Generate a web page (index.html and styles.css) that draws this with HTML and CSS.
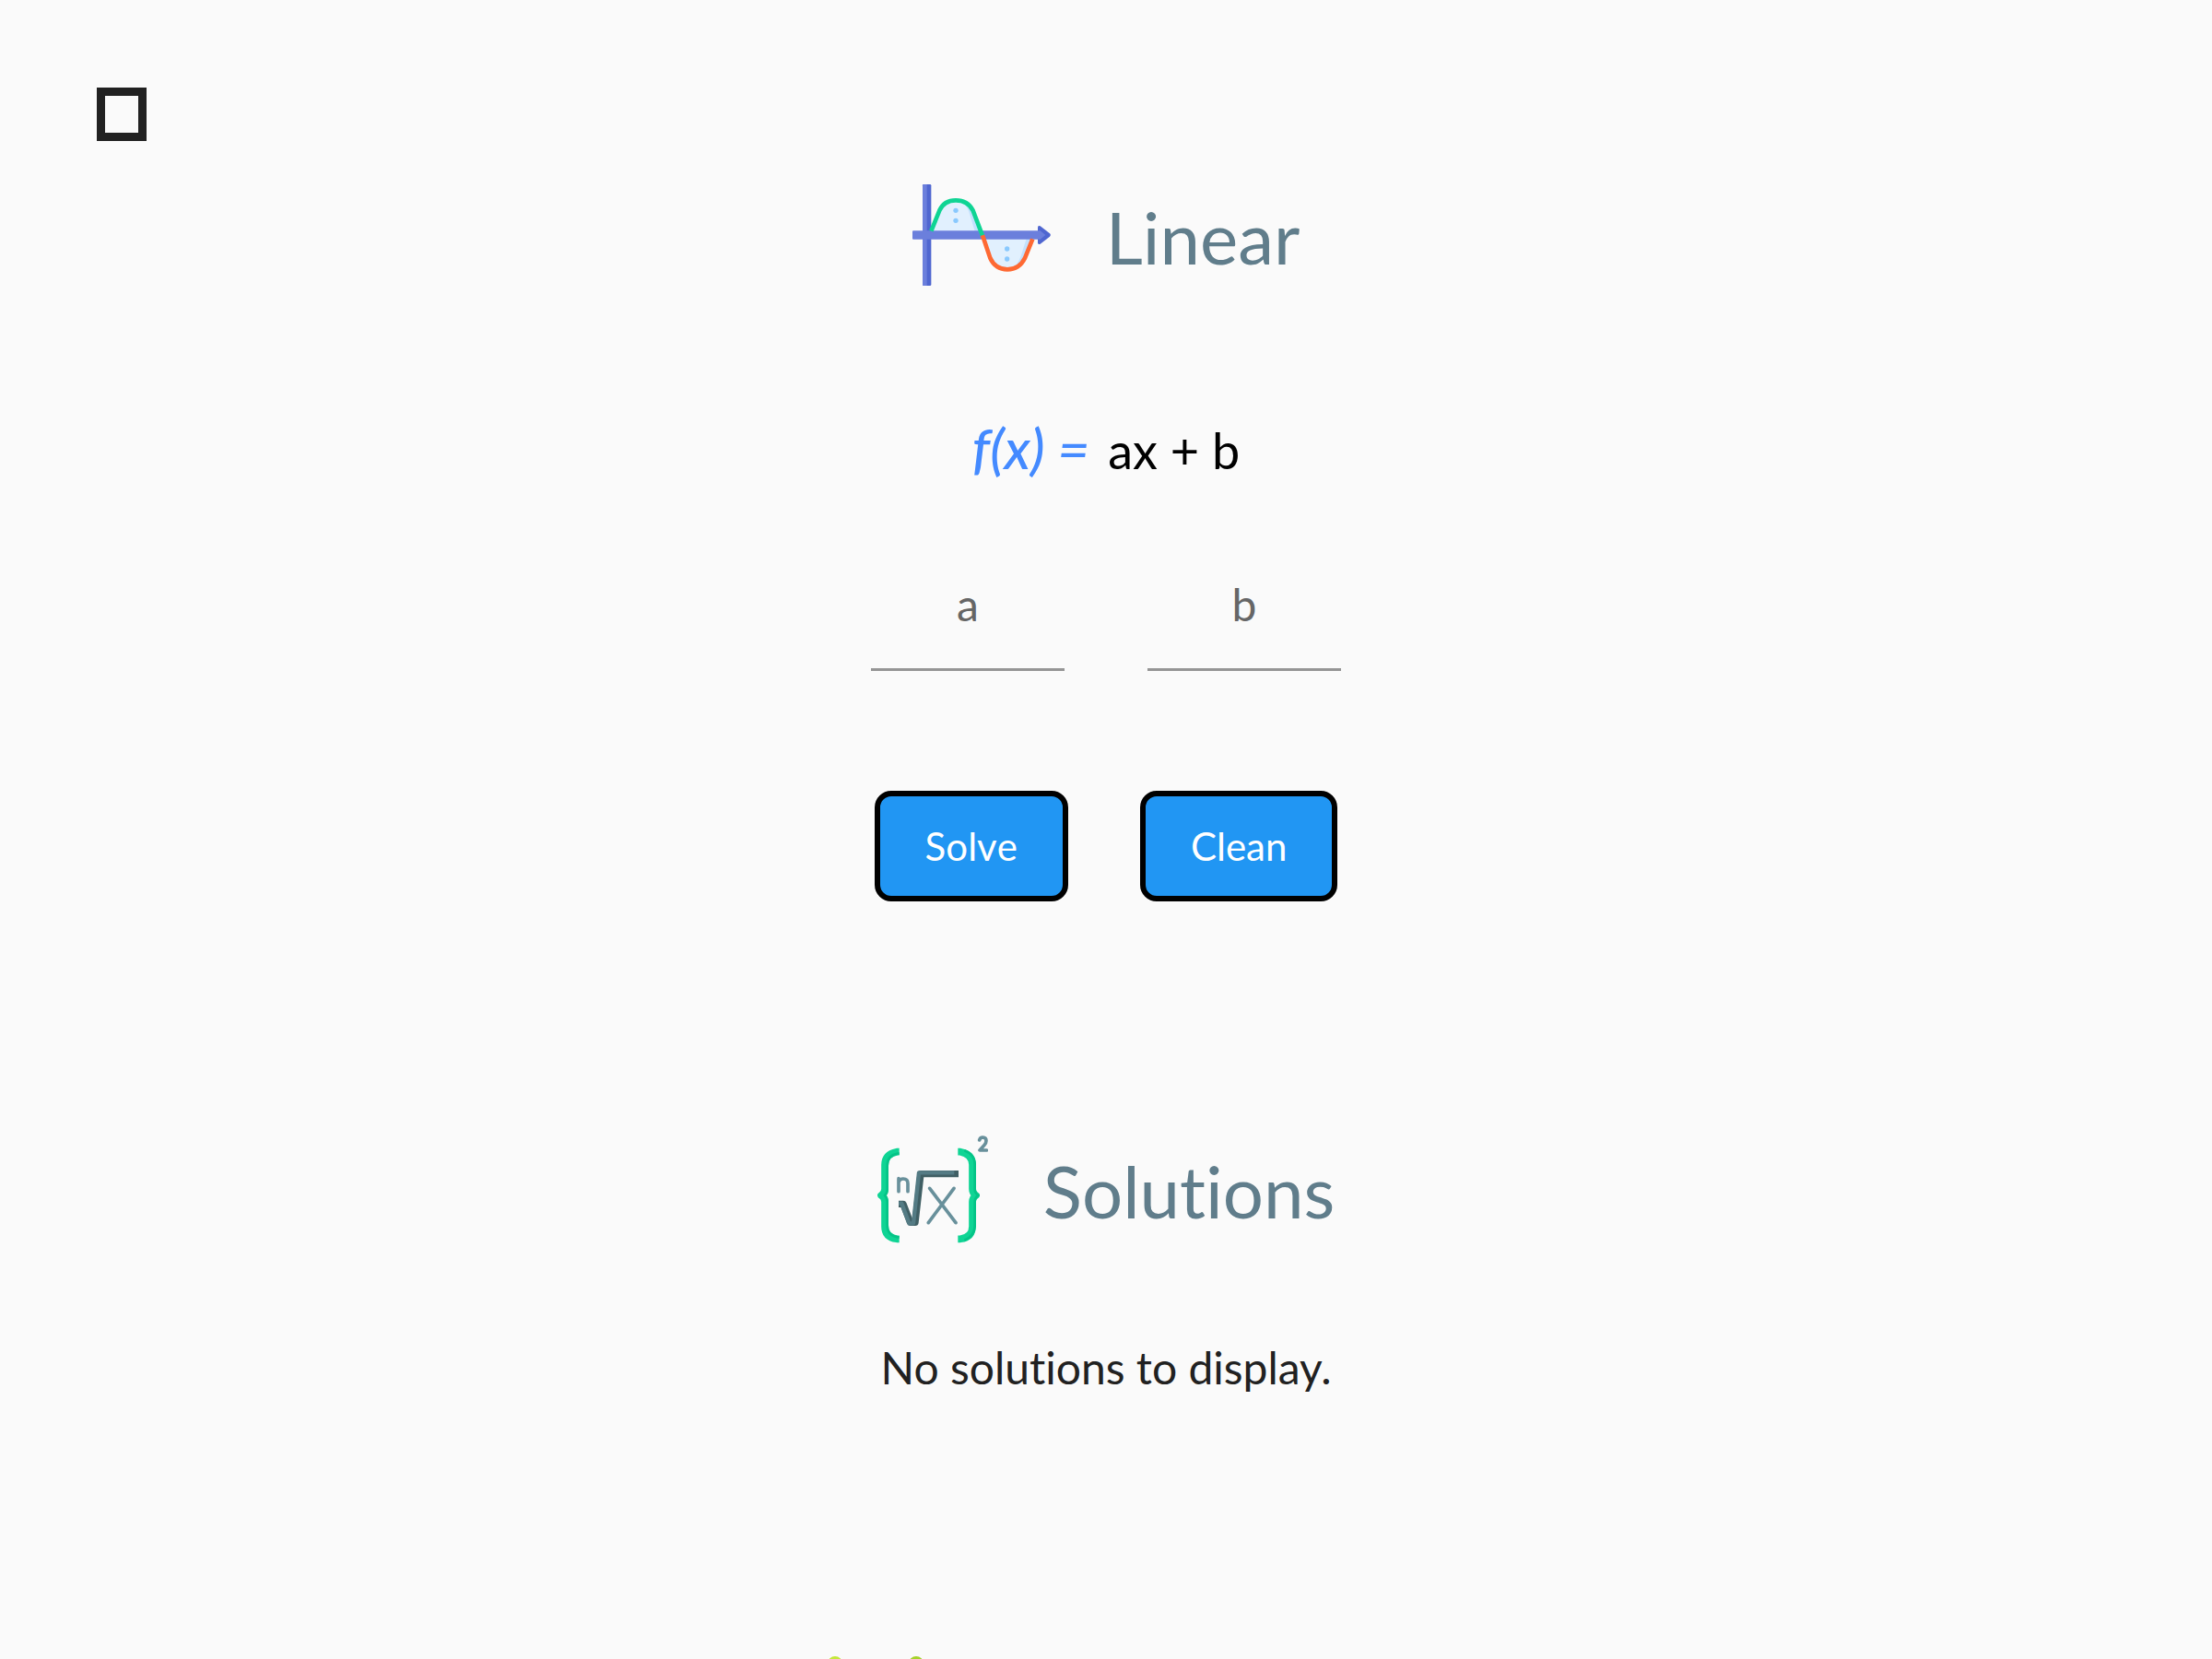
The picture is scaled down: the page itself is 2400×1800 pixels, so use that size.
FILE: index.html
```html
<!DOCTYPE html>
<html lang="en">
<head>
<meta charset="utf-8">
<meta name="viewport" content="width=device-width, initial-scale=1">
<title>Linear</title>
<link rel="stylesheet" href="styles.css">
</head>
<body>
<div class="page">
  <header class="topbar">
    <button class="menu" type="button" aria-label="Back"><span class="menu-box"></span></button>
  </header>
  <main class="content">
    <div class="heading">
      <svg class="icon-wave" viewBox="51 0 450 450" aria-hidden="true">
        <path d="M112 212L139 145Q154 112 192 112Q231 112 248 145L276 225Z" fill="#e1f0fe"/>
        <path d="M214 116Q239 122 248 145L272 212H254L238 160Q231 132 214 116Z" fill="#c3e1fd"/>
        <path d="M279 225L304 300Q321 337 360 337Q399 337 417 300L442 237Z" fill="#e1f0fe"/>
        <path d="M422 237H442L417 300Q405 330 372 336Q395 322 405 290Z" fill="#c3e1fd"/>
        <rect x="84" y="60" width="28" height="330" rx="4" fill="#4f66d0"/>
        <path d="M88 60H98V390H88Q84 390 84 386V64Q84 60 88 60Z" fill="#6b7fdc"/>
        <path d="M459 200Q459 192 467 196L498 220Q503 225 498 230L467 254Q459 258 459 250Z" fill="#4f66d0"/>
        <path d="M51 214Q51 211 54 211H467L484 225L467 239H54Q51 239 51 236Z" fill="#6b7fdc"/>
        <path d="M112 212L139 145Q154 112 192 112Q231 112 248 145L279 227" fill="none" stroke="#0fd494" stroke-width="14"/>
        <path d="M279 226L304 300Q321 337 360 337Q399 337 417 300L442 238" fill="none" stroke="#fe6933" stroke-width="14"/>
        <g fill="#8ac9fe">
          <circle cx="192" cy="145" r="8"/><circle cx="192" cy="178" r="8"/>
          <circle cx="359" cy="270" r="8"/><circle cx="359" cy="303" r="8"/>
        </g>
      </svg>
      <h1 class="title">Linear</h1>
    </div>

    <p class="formula"><em class="formula-name">f(x) =</em><span>ax + b</span></p>

    <form class="form">
      <div class="fields">
        <input class="field" type="text" placeholder="a" aria-label="a">
        <input class="field" type="text" placeholder="b" aria-label="b">
      </div>
      <div class="actions">
        <button class="action" type="button">Solve</button>
        <button class="action" type="reset">Clean</button>
      </div>
    </form>

    <div class="heading heading-solutions">
      <svg class="icon-root" viewBox="63 60 360 360" aria-hidden="true">
        <g fill="none" stroke-linejoin="round">
          <path d="M134 119H126Q87 127 87 161V240Q87 254 75 261Q87 268 87 282V362Q87 397 126 403H134" stroke="#0fd494" stroke-width="23"/>
          <path d="M134 125H130Q95 130 95 165V242Q95 254 87 261Q95 268 95 282V358Q95 392 130 397H134" stroke="#04c487" stroke-width="8"/>
          <path d="M325 119H333Q372 127 372 161V240Q372 254 384 261Q372 268 372 282V362Q372 397 333 403H325" stroke="#0fd494" stroke-width="23"/>
          <path d="M346 115Q380 127 380 161V240Q380 254 392 261Q380 268 380 282V362Q378 395 346 407" stroke="#04c487" stroke-width="8"/>
          <path d="M132 289H147L170 349H186L204 191H327" stroke="#405f64" stroke-width="22"/>
          <path d="M132 287H142L166 352H180L198 187H313" stroke="#547b84" stroke-width="13"/>
        </g>
        <g fill="none" stroke="#68909b" stroke-linecap="round" stroke-linejoin="round">
          <path d="M233 238L318 350M312 238L229 350" stroke-width="11"/>
          <path d="M132 206V248M132 218Q136 207 147 207Q162 207 162 222V248" stroke-width="11"/>
          <path d="M395 81Q397 72 406 72Q417 73 417 83Q417 90 411 97L396 114H418" stroke-width="11"/>
        </g>
      </svg>
      <h2 class="title">Solutions</h2>
    </div>

    <p class="message">No solutions to display.</p>

    <svg class="icon-next" viewBox="0 0 120 120" aria-hidden="true">
      <circle cx="16" cy="8" r="8" fill="#c4e83a"/>
      <circle cx="104" cy="8" r="8" fill="#a5d22a"/>
    </svg>
  </main>
</div>
</body>
</html>
```
FILE: styles.css
```css
* {
  box-sizing: border-box;
}

body {
  margin: 0;
  background: #fafafa;
  color: #212121;
  font-family: Lato, "Open Sans", sans-serif;
  font-variant-ligatures: none;
}

.page {
  height: 100vh;
  overflow: hidden;
}

.topbar {
  height: 180px;
  padding: 95px 105px 0;
}

.menu {
  display: block;
  padding: 0;
  border: 0;
  background: none;
}

.menu-box {
  display: block;
  width: 54px;
  height: 58px;
  border: 9px solid #212121;
}

.content {
  display: flex;
  flex-direction: column;
  align-items: center;
}

.heading {
  display: flex;
  align-items: center;
  gap: 60px;
}

.heading-solutions {
  margin-top: 252px;
}

.icon-wave {
  width: 150px;
  height: 150px;
}

.icon-root {
  width: 120px;
  height: 120px;
}

.title {
  margin: 0;
  padding-top: 4px;
  color: #607d8b;
  font-size: 78px;
  font-weight: 400;
  font-kerning: none;
  line-height: 96px;
}

.formula {
  display: flex;
  align-items: baseline;
  gap: 20px;
  margin: 120px 0 0;
  color: #000;
  font-size: 54px;
  line-height: 72px;
}

.formula-name {
  color: #448aff;
  font-size: 60px;
  font-weight: 500;
}

.form {
  display: flex;
  flex-direction: column;
  align-items: center;
  gap: 130px;
  margin-top: 60px;
}

.fields {
  display: flex;
  gap: 90px;
}

.field {
  width: 210px;
  height: 143px;
  padding: 0;
  border: 0;
  border-bottom: 3px solid #959595;
  border-radius: 0;
  background: none;
  color: #212121;
  font: inherit;
  font-size: 48px;
  text-align: center;
  outline: 0;
}

.field::placeholder {
  color: #666;
  opacity: 1;
}

.actions {
  display: flex;
  gap: 78px;
}

.action {
  height: 120px;
  padding: 0 49px;
  border: 6px solid #000;
  border-radius: 18px;
  background: #2196f3;
  color: #fff;
  font: inherit;
  font-size: 42px;
  font-kerning: none;
}

.message {
  margin: 104px 0 0;
  font-size: 48px;
  line-height: 60px;
}

.icon-next {
  flex: none;
  width: 120px;
  height: 120px;
  margin: 283px 500px 0 0;
}
```
